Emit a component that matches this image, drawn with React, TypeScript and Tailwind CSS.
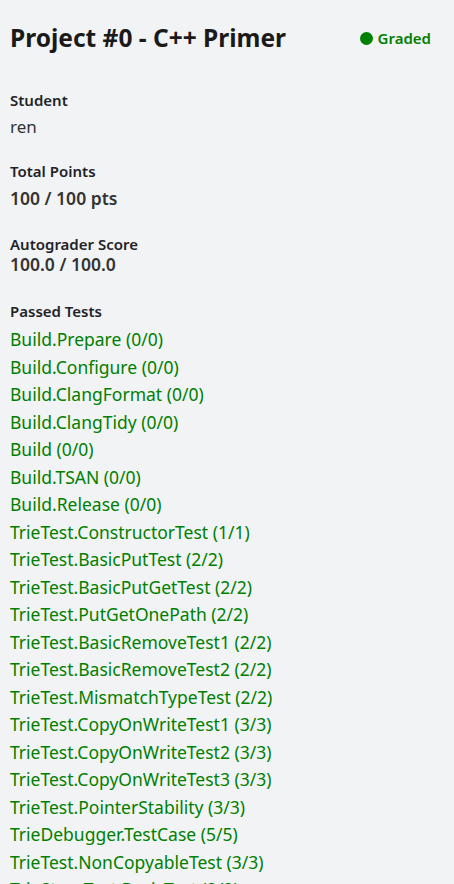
import React from "react";

const tests = [
  "Build.Prepare (0/0)",
  "Build.Configure (0/0)",
  "Build.ClangFormat (0/0)",
  "Build.ClangTidy (0/0)",
  "Build (0/0)",
  "Build.TSAN (0/0)",
  "Build.Release (0/0)",
  "TrieTest.ConstructorTest (1/1)",
  "TrieTest.BasicPutTest (2/2)",
  "TrieTest.BasicPutGetTest (2/2)",
  "TrieTest.PutGetOnePath (2/2)",
  "TrieTest.BasicRemoveTest1 (2/2)",
  "TrieTest.BasicRemoveTest2 (2/2)",
  "TrieTest.MismatchTypeTest (2/2)",
  "TrieTest.CopyOnWriteTest1 (3/3)",
  "TrieTest.CopyOnWriteTest2 (3/3)",
  "TrieTest.CopyOnWriteTest3 (3/3)",
  "TrieTest.PointerStability (3/3)",
  "TrieDebugger.TestCase (5/5)",
  "TrieTest.NonCopyableTest (3/3)",
  "TrieStoreTest.BasicTest (2/2)",
  "TrieStoreTest.GuardTest (2/2)",
];

function Label({ children }: { children: React.ReactNode }) {
  return <div className="text-[15px] font-semibold leading-[20px] text-[#1f2328]">{children}</div>;
}

export default function App() {
  return (
    <div className="h-screen overflow-hidden bg-[#f2f3f5] px-[10px] font-['Noto_Sans',sans-serif] text-[#1f2328]">
      <header className="mt-[20px] flex h-[36px] items-center justify-between pr-[13px]">
        <h1 className="text-[24.5px] font-bold leading-[36px] text-[#1a1a1a]">Project #0 - C++ Primer</h1>
        <div className="flex items-center gap-[5px] text-[15px] font-semibold text-[#008000]">
          <span className="h-[13px] w-[13px] rounded-full bg-[#008000]" />
          Graded
        </div>
      </header>

      <section className="mt-[34px]">
        <Label>Student</Label>
        <div className="mt-[3px] text-[17px] leading-[27px] text-[#333]">ren</div>
      </section>

      <section className="mt-[21px]">
        <Label>Total Points</Label>
        <div className="mt-[4px] text-[17.5px] font-semibold leading-[27px] text-[#333]">100 / 100 pts</div>
      </section>

      <section className="mt-[22px]">
        <Label>Autograder Score</Label>
        <div className="text-[17.5px] font-semibold leading-[20px] text-[#333]">100.0 / 100.0</div>
      </section>

      <section className="mt-[27px]">
        <Label>Passed Tests</Label>
        <ul className="mt-[5px]">
          {tests.map((t) => (
            <li key={t} className="text-[17.5px] leading-[27.5px] text-[#008000]">
              {t}
            </li>
          ))}
        </ul>
      </section>
    </div>
  );
}
